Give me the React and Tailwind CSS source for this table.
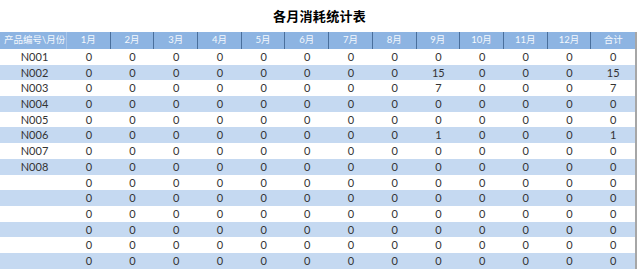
import React from 'react';

const months = ['1月', '2月', '3月', '4月', '5月', '6月', '7月', '8月', '9月', '10月', '11月', '12月', '合计'];

const rows = [
  { id: 'N001', v: {} },
  { id: 'N002', v: { 8: 15, 12: 15 } },
  { id: 'N003', v: { 8: 7, 12: 7 } },
  { id: 'N004', v: {} },
  { id: 'N005', v: {} },
  { id: 'N006', v: { 8: 1, 12: 1 } },
  { id: 'N007', v: {} },
  { id: 'N008', v: {} },
  { id: '', v: {} },
  { id: '', v: {} },
  { id: '', v: {} },
  { id: '', v: {} },
  { id: '', v: {} },
  { id: '', v: {} },
];

const font = { fontFamily: 'Lato, "Noto Sans CJK SC", sans-serif' };

export default function App() {
  return (
    <div className="w-[639px] h-[273px] bg-white overflow-hidden" style={font}>
      <div className="h-[32px] flex items-center justify-center pt-[1px]">
        <h1 className="text-[13px] font-bold text-black tracking-[0.3px]">各月消耗统计表</h1>
      </div>
      <div className="w-[637px] border-r-2 border-[#a6a6a6]">
        <div className="grid grid-cols-[67px_repeat(13,1fr)] h-[17px] bg-[#8db4e2] text-[#f4f8fd] text-[9.5px]">
          <div className="flex items-center pl-[4px] border-r border-[#a9c6ea] whitespace-nowrap">产品编号\月份</div>
          {months.map((m, i) => (
            <div
              key={m}
              className={`flex items-center justify-center ${i < 12 ? 'border-r border-[#4a6f9c]' : ''}`}
            >
              {m}
            </div>
          ))}
        </div>
        {rows.map((r, ri) => (
          <div
            key={ri}
            className={`grid grid-cols-[67px_repeat(13,1fr)] h-[15.7px] text-[11px] text-[#333] ${
              ri % 2 === 1 ? 'bg-[#c5d9f1]' : 'bg-white'
            }`}
          >
            <div className="flex items-center justify-center pl-[2px]">{r.id}</div>
            {months.map((m, i) => (
              <div key={m} className="flex items-center justify-center">
                {r.v[i] ?? 0}
              </div>
            ))}
          </div>
        ))}
      </div>
    </div>
  );
}
